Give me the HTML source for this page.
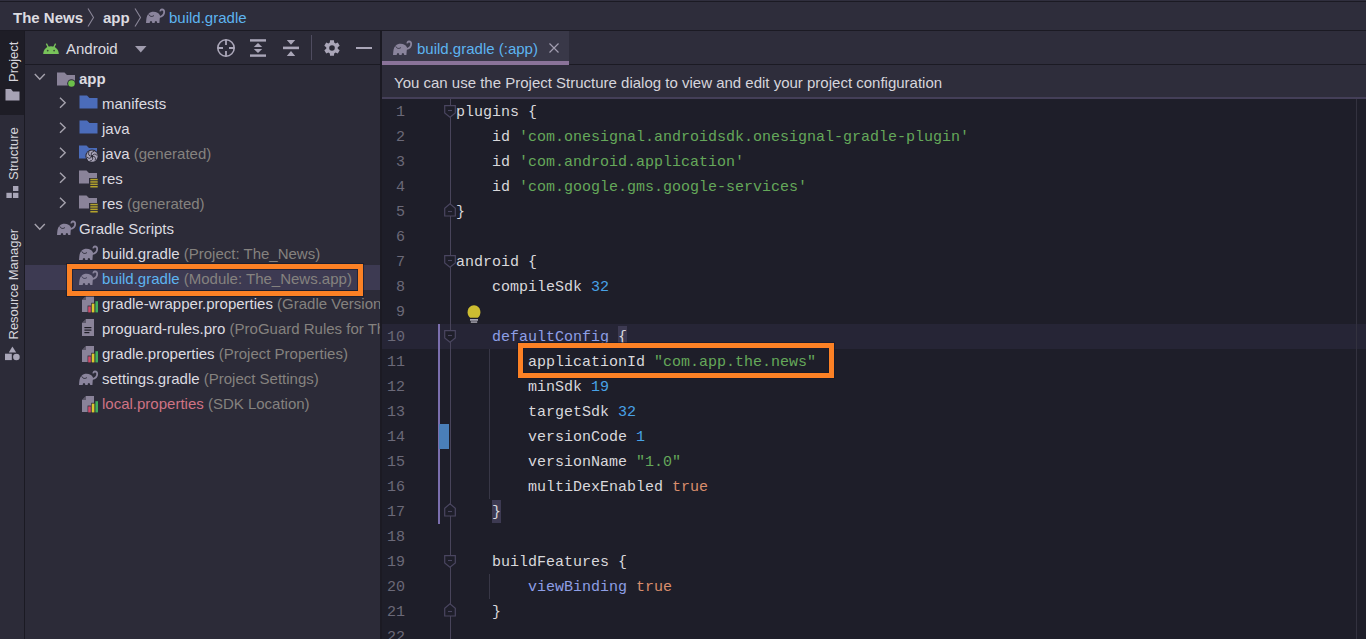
<!DOCTYPE html>
<html><head><meta charset="utf-8"><style>
*{margin:0;padding:0;box-sizing:border-box}
html,body{width:1366px;height:639px;overflow:hidden;background:#1f1e27}
body{position:relative;font-family:"Liberation Sans",sans-serif;font-size:15px;color:#dcdbe0}
.a{position:absolute}
.t{position:absolute;white-space:pre;line-height:20px}
.gr{color:#85827f}
.bl{color:#5db4f0}
.m{position:absolute;white-space:pre;font-family:"Liberation Mono",monospace;font-size:15px;line-height:25px;color:#d9d8dc;left:456px}
.s{color:#65a85a}
.n{color:#48a2e6}
.k{color:#d98d6c}
.f{color:#8e9fe6}
.ln{position:absolute;white-space:pre;font-family:"Liberation Mono",monospace;font-size:15px;line-height:25px;color:#6b6978;text-align:right;width:40px;left:365px}
svg{position:absolute;overflow:visible}
</style></head><body>
<div class="a" style="left:0px;top:0px;width:1366px;height:31px;background:#2e2d3b;"></div>
<div class="a" style="left:0px;top:0px;width:1366px;height:1px;background:#302f3e;"></div>
<div class="a" style="left:0px;top:1px;width:1366px;height:1px;background:#1b1a23;"></div>
<div class="a" style="left:0px;top:30px;width:1366px;height:1px;background:#1b1a23;"></div>
<div class="a" style="left:0px;top:31px;width:24px;height:608px;background:#2c2b38;"></div>
<div class="a" style="left:0px;top:31px;width:24px;height:84px;background:#1e1d26;"></div>
<div class="a" style="left:24px;top:31px;width:1px;height:608px;background:#1b1a23;"></div>
<div class="a" style="left:25px;top:31px;width:355px;height:608px;background:#2c2b38;"></div>
<div class="a" style="left:25px;top:64px;width:355px;height:1px;background:#1b1a23;"></div>
<div class="a" style="left:380px;top:31px;width:2px;height:608px;background:#1b1a23;"></div>
<div class="a" style="left:382px;top:31px;width:984px;height:33px;background:#2e2d3b;"></div>
<div class="a" style="left:382px;top:64px;width:984px;height:1px;background:#1b1a23;"></div>
<div class="a" style="left:382px;top:31px;width:187px;height:30px;background:#393848;"></div>
<div class="a" style="left:382px;top:61px;width:187px;height:4px;background:#8a7399;"></div>
<div class="a" style="left:382px;top:65px;width:984px;height:32px;background:#2e2d3b;"></div>
<div class="a" style="left:382px;top:97px;width:984px;height:2px;background:#443f58;"></div>
<div class="a" style="left:382px;top:99px;width:984px;height:540px;background:#1e1e29;"></div>
<div class="t" style="left:13px;top:8px;font-weight:bold">The News</div>
<svg style="left:87px;top:8px" width="8" height="19"><path d="M1,0.5 L6.5,9.5 L1,18.5" fill="none" stroke="#8a8698" stroke-width="1.1"/></svg>
<div class="t" style="left:103px;top:8px;font-weight:bold">app</div>
<svg style="left:134px;top:8px" width="8" height="19"><path d="M1,0.5 L6.5,9.5 L1,18.5" fill="none" stroke="#8a8698" stroke-width="1.1"/></svg>
<svg style="left:146px;top:9px" width="19" height="14" viewBox="0 0 19 14"><path d="M0,14 L0.3,10.5 C0.8,5.4 3.6,2.8 7.6,2.8 C10.6,2.8 12.8,4.2 14,6.4 L13.4,14 L11.2,14 A1.3,2 0 0 0 8.6,14 L6.3,14 A1.3,2 0 0 0 3.7,14 Z" fill="#8a849c"/><path d="M12.8,8.2 C16.2,7.6 18.2,5.4 18.2,3.1 C18.2,1.3 17,0.5 16,0.5 C14.9,0.5 14.3,1.3 14.4,2.4" fill="none" stroke="#8a849c" stroke-width="1.8"/><path d="M2.8,5.4 C3.8,7.8 6.4,8 8,6.4" fill="none" stroke="#2e2d3b" stroke-width="1"/></svg>
<div class="t" style="left:169px;top:8px" class="bl"><span class="bl">build.gradle</span></div>
<div class="t" style="left:-6px;top:54px;font-size:13px;width:40px;transform:rotate(-90deg);transform-origin:center;line-height:16px;color:#d6d5dc">Project</div>
<svg style="left:5px;top:89px" width="15" height="12" viewBox="0 0 15 12"><path d="M0.5,0 L6,0 L8,2.5 L14.5,2.5 L14.5,11.5 L0.5,11.5 Z" fill="#a7a3b5"/></svg>
<div class="t" style="left:-12px;top:146px;font-size:13px;width:52px;transform:rotate(-90deg);transform-origin:center;line-height:16px;color:#d6d5dc">Structure</div>
<svg style="left:6px;top:186px" width="13" height="13" viewBox="0 0 13 13"><rect x="7" y="0" width="5.4" height="5" fill="#a9a6b8"/><rect x="0.4" y="6.8" width="5.4" height="5.2" fill="#a9a6b8"/><rect x="7" y="6.8" width="5.4" height="5.2" fill="#a9a6b8"/></svg>
<div class="t" style="left:-42px;top:276px;font-size:13px;width:111px;transform:rotate(-90deg);transform-origin:center;line-height:16px;color:#d6d5dc">Resource Manager</div>
<svg style="left:5px;top:346px" width="15" height="15" viewBox="0 0 15 15"><path d="M7.4,0.4 L11.2,6.4 L3.8,6.4 Z" fill="#a9a6b8"/><rect x="0" y="7.7" width="6.8" height="6.4" fill="#a9a6b8"/><circle cx="11.4" cy="11" r="3.3" fill="#a9a6b8"/></svg>
<svg style="left:43px;top:43px" width="16" height="11" viewBox="0 0 16 11"><path d="M0.2,11 C0.4,6.5 3.5,3.3 8,3.3 C12.5,3.3 15.6,6.5 15.8,11 Z" fill="#78c35a"/><path d="M3.4,0.6 L5.4,4.6 M12.6,0.6 L10.6,4.6" stroke="#78c35a" stroke-width="1.3"/><circle cx="4.7" cy="7.6" r="0.9" fill="#3b4a35"/><circle cx="11.1" cy="7.6" r="0.9" fill="#3b4a35"/></svg>
<div class="t" style="left:66px;top:39px">Android</div>
<svg style="left:135px;top:46px" width="12" height="7" viewBox="0 0 12 7"><path d="M0,0 L11.5,0 L5.75,6.5 Z" fill="#a09cae"/></svg>
<svg style="left:216px;top:38px" width="20" height="20" viewBox="0 0 20 20"><circle cx="10" cy="10" r="8.2" fill="none" stroke="#aaa6b8" stroke-width="1.6"/><path d="M10,1.5 V7 M10,13 V18.5 M1.5,10 H7 M13,10 H18.5" stroke="#aaa6b8" stroke-width="1.8"/></svg>
<svg style="left:250px;top:38px" width="17" height="20" viewBox="0 0 17 20"><rect x="0" y="1.2" width="16" height="2.4" fill="#aaa6b8"/><rect x="0" y="16.4" width="16" height="2.4" fill="#aaa6b8"/><path d="M8,5 L12.2,9 L3.8,9 Z M8,15 L12.2,11 L3.8,11 Z" fill="#aaa6b8"/></svg>
<svg style="left:283px;top:38px" width="17" height="20" viewBox="0 0 17 20"><rect x="0" y="8.6" width="16" height="2.6" fill="#aaa6b8"/><path d="M3.8,2 L12.2,2 L8,6.8 Z M3.8,18 L12.2,18 L8,13 Z" fill="#aaa6b8"/></svg>
<div class="a" style="left:311px;top:35px;width:1px;height:25px;background:#4f4c60"></div>
<svg style="left:324px;top:40px" width="16" height="16" viewBox="0 0 16 16"><path d="M6.06,0.24 L9.94,0.24 L10.17,2.62 L11.57,3.43 L13.75,2.44 L15.69,5.79 L13.74,7.19 L13.74,8.81 L15.69,10.21 L13.75,13.56 L11.57,12.57 L10.17,13.38 L9.94,15.76 L6.06,15.76 L5.83,13.38 L4.43,12.57 L2.25,13.56 L0.31,10.21 L2.26,8.81 L2.26,7.19 L0.31,5.79 L2.25,2.44 L4.43,3.43 L5.83,2.62 Z" fill="#aaa6b8"/><circle cx="8" cy="8" r="2.8" fill="#2c2b38"/></svg>
<div class="a" style="left:356px;top:47px;width:16px;height:2px;background:#aaa6b8"></div>
<div class="a" style="left:0;top:0;width:380px;height:639px;overflow:hidden">
<div class="a" style="left:25px;top:265px;width:355px;height:25px;background:#3d3a52"></div>
<svg style="left:34px;top:73px" width="12" height="8" viewBox="0 0 12 8"><path d="M0.8,1 L5.8,6.2 L10.8,1" fill="none" stroke="#a6a3ae" stroke-width="1.4"/></svg>
<svg style="left:57px;top:72px" width="19" height="16" viewBox="0 0 19 16"><path d="M0,0.5 L7.5,0.5 L10,3 L18,3 L18,13.5 L0,13.5 Z" fill="#8a8399"/><circle cx="14.5" cy="11.5" r="4.3" fill="#2c2b38"/><circle cx="14.5" cy="11.5" r="3.3" fill="#6cc04a"/></svg>
<div class="t" style="left:79px;top:69px;font-weight:bold">app</div>
<svg style="left:59px;top:97px" width="8" height="12" viewBox="0 0 8 12"><path d="M1,0.8 L6.2,5.8 L1,10.8" fill="none" stroke="#a6a3ae" stroke-width="1.4"/></svg>
<svg style="left:79px;top:95px" width="19" height="14" viewBox="0 0 18 14"><path d="M0,0.5 L7.5,0.5 L10,3 L18,3 L18,13.5 L0,13.5 Z" fill="#4b6cba"/></svg>
<div class="t" style="left:102px;top:94px">manifests</div>
<svg style="left:59px;top:122px" width="8" height="12" viewBox="0 0 8 12"><path d="M1,0.8 L6.2,5.8 L1,10.8" fill="none" stroke="#a6a3ae" stroke-width="1.4"/></svg>
<svg style="left:79px;top:120px" width="19" height="14" viewBox="0 0 18 14"><path d="M0,0.5 L7.5,0.5 L10,3 L18,3 L18,13.5 L0,13.5 Z" fill="#4b6cba"/></svg>
<div class="t" style="left:102px;top:119px">java</div>
<svg style="left:59px;top:147px" width="8" height="12" viewBox="0 0 8 12"><path d="M1,0.8 L6.2,5.8 L1,10.8" fill="none" stroke="#a6a3ae" stroke-width="1.4"/></svg>
<svg style="left:79px;top:145px" width="21" height="19" viewBox="0 0 21 19"><path d="M0,0.5 L7.5,0.5 L10,3 L18,3 L18,13.5 L0,13.5 Z" fill="#4b6cba"/><circle cx="13" cy="11.2" r="6.6" fill="#2c2b38"/><circle cx="13" cy="11.2" r="5.6" fill="#a9a4b8"/><path d="M13,11.2 Q17.60,11.20 16.10,15.62" fill="none" stroke="#2c2b38" stroke-width="0.9"/><path d="M13,11.2 Q15.30,15.18 10.72,16.09" fill="none" stroke="#2c2b38" stroke-width="0.9"/><path d="M13,11.2 Q10.70,15.18 7.62,11.67" fill="none" stroke="#2c2b38" stroke-width="0.9"/><path d="M13,11.2 Q8.40,11.20 9.90,6.78" fill="none" stroke="#2c2b38" stroke-width="0.9"/><path d="M13,11.2 Q10.70,7.22 15.28,6.31" fill="none" stroke="#2c2b38" stroke-width="0.9"/><path d="M13,11.2 Q15.30,7.22 18.38,10.73" fill="none" stroke="#2c2b38" stroke-width="0.9"/><circle cx="13" cy="11.2" r="1" fill="#2c2b38"/></svg>
<div class="t" style="left:102px;top:144px">java <span class="gr">(generated)</span></div>
<svg style="left:59px;top:172px" width="8" height="12" viewBox="0 0 8 12"><path d="M1,0.8 L6.2,5.8 L1,10.8" fill="none" stroke="#a6a3ae" stroke-width="1.4"/></svg>
<svg style="left:79px;top:170px" width="20" height="19" viewBox="0 0 20 19"><path d="M0,0.5 L7.5,0.5 L10,3 L18,3 L18,13.5 L0,13.5 Z" fill="#8a8399"/><rect x="10" y="8" width="10" height="11" fill="#2c2b38"/><rect x="11.3" y="8.8" width="7.4" height="1.5" fill="#b4a32c"/><rect x="11.3" y="11.2" width="7.4" height="1.5" fill="#b4a32c"/><rect x="11.3" y="13.6" width="7.4" height="1.5" fill="#b4a32c"/><rect x="11.3" y="16.0" width="7.4" height="1.5" fill="#b4a32c"/></svg>
<div class="t" style="left:102px;top:169px">res</div>
<svg style="left:59px;top:197px" width="8" height="12" viewBox="0 0 8 12"><path d="M1,0.8 L6.2,5.8 L1,10.8" fill="none" stroke="#a6a3ae" stroke-width="1.4"/></svg>
<svg style="left:79px;top:195px" width="20" height="19" viewBox="0 0 20 19"><path d="M0,0.5 L7.5,0.5 L10,3 L18,3 L18,13.5 L0,13.5 Z" fill="#8a8399"/><rect x="10" y="8" width="10" height="11" fill="#2c2b38"/><rect x="11.3" y="8.8" width="7.4" height="1.5" fill="#b4a32c"/><rect x="11.3" y="11.2" width="7.4" height="1.5" fill="#b4a32c"/><rect x="11.3" y="13.6" width="7.4" height="1.5" fill="#b4a32c"/><rect x="11.3" y="16.0" width="7.4" height="1.5" fill="#b4a32c"/></svg>
<div class="t" style="left:102px;top:194px">res <span class="gr">(generated)</span></div>
<svg style="left:34px;top:223px" width="12" height="8" viewBox="0 0 12 8"><path d="M0.8,1 L5.8,6.2 L10.8,1" fill="none" stroke="#a6a3ae" stroke-width="1.4"/></svg>
<svg style="left:57px;top:221px" width="19" height="14" viewBox="0 0 19 14"><path d="M0,14 L0.3,10.5 C0.8,5.4 3.6,2.8 7.6,2.8 C10.6,2.8 12.8,4.2 14,6.4 L13.4,14 L11.2,14 A1.3,2 0 0 0 8.6,14 L6.3,14 A1.3,2 0 0 0 3.7,14 Z" fill="#8a849c"/><path d="M12.8,8.2 C16.2,7.6 18.2,5.4 18.2,3.1 C18.2,1.3 17,0.5 16,0.5 C14.9,0.5 14.3,1.3 14.4,2.4" fill="none" stroke="#8a849c" stroke-width="1.8"/><path d="M2.8,5.4 C3.8,7.8 6.4,8 8,6.4" fill="none" stroke="#2c2b38" stroke-width="1"/></svg>
<div class="t" style="left:79px;top:219px">Gradle Scripts</div>
<svg style="left:79px;top:246px" width="19" height="14" viewBox="0 0 19 14"><path d="M0,14 L0.3,10.5 C0.8,5.4 3.6,2.8 7.6,2.8 C10.6,2.8 12.8,4.2 14,6.4 L13.4,14 L11.2,14 A1.3,2 0 0 0 8.6,14 L6.3,14 A1.3,2 0 0 0 3.7,14 Z" fill="#8a849c"/><path d="M12.8,8.2 C16.2,7.6 18.2,5.4 18.2,3.1 C18.2,1.3 17,0.5 16,0.5 C14.9,0.5 14.3,1.3 14.4,2.4" fill="none" stroke="#8a849c" stroke-width="1.8"/><path d="M2.8,5.4 C3.8,7.8 6.4,8 8,6.4" fill="none" stroke="#2c2b38" stroke-width="1"/></svg>
<div class="t" style="left:102px;top:244px">build.gradle <span class="gr">(Project: The_News)</span></div>
<svg style="left:79px;top:271px" width="19" height="14" viewBox="0 0 19 14"><path d="M0,14 L0.3,10.5 C0.8,5.4 3.6,2.8 7.6,2.8 C10.6,2.8 12.8,4.2 14,6.4 L13.4,14 L11.2,14 A1.3,2 0 0 0 8.6,14 L6.3,14 A1.3,2 0 0 0 3.7,14 Z" fill="#8a849c"/><path d="M12.8,8.2 C16.2,7.6 18.2,5.4 18.2,3.1 C18.2,1.3 17,0.5 16,0.5 C14.9,0.5 14.3,1.3 14.4,2.4" fill="none" stroke="#8a849c" stroke-width="1.8"/><path d="M2.8,5.4 C3.8,7.8 6.4,8 8,6.4" fill="none" stroke="#3d3a52" stroke-width="1"/></svg>
<div class="t" style="left:102px;top:269px"><span class="bl">build.gradle</span> <span class="gr">(Module: The_News.app)</span></div>
<svg style="left:82px;top:296px" width="18" height="18" viewBox="0 0 18 18"><path d="M4,0 L12,0 L12,16 L0,16 L0,4 Z" fill="#8a8399"/><path d="M0,4 L4,4 L4,0" fill="#2c2b38" opacity="0.5"/><rect x="5.6" y="9.6" width="3.6" height="7.2" fill="#2c2b38"/><rect x="9.2" y="6.8" width="3.6" height="10" fill="#2c2b38"/><rect x="12.8" y="4.4" width="3.8" height="12.4" fill="#2c2b38"/><rect x="6.2" y="10.4" width="2.6" height="6" fill="#d24a6a"/><rect x="9.8" y="7.6" width="2.6" height="8.8" fill="#d9c92e"/><rect x="13.4" y="5.2" width="2.6" height="11.2" fill="#3fae5a"/></svg>
<div class="t" style="left:102px;top:294px">gradle-wrapper.properties <span class="gr">(Gradle Version)</span></div>
<svg style="left:82px;top:319px" width="13" height="18" viewBox="0 0 13 18"><path d="M4,0 L12,0 L12,17 L0,17 L0,4 Z" fill="#8a8399"/><path d="M0,4 L4,4 L4,0" fill="#2c2b38" opacity="0.5"/><rect x="2.4" y="8" width="7" height="1.2" fill="#1d1c24"/><rect x="2.4" y="10.5" width="7" height="1.2" fill="#1d1c24"/><rect x="2.4" y="13" width="5" height="1.2" fill="#1d1c24"/></svg>
<div class="t" style="left:102px;top:319px">proguard-rules.pro <span class="gr">(ProGuard Rules for The_News.app)</span></div>
<svg style="left:82px;top:346px" width="18" height="18" viewBox="0 0 18 18"><path d="M4,0 L12,0 L12,16 L0,16 L0,4 Z" fill="#8a8399"/><path d="M0,4 L4,4 L4,0" fill="#2c2b38" opacity="0.5"/><rect x="5.6" y="9.6" width="3.6" height="7.2" fill="#2c2b38"/><rect x="9.2" y="6.8" width="3.6" height="10" fill="#2c2b38"/><rect x="12.8" y="4.4" width="3.8" height="12.4" fill="#2c2b38"/><rect x="6.2" y="10.4" width="2.6" height="6" fill="#d24a6a"/><rect x="9.8" y="7.6" width="2.6" height="8.8" fill="#d9c92e"/><rect x="13.4" y="5.2" width="2.6" height="11.2" fill="#3fae5a"/></svg>
<div class="t" style="left:102px;top:344px">gradle.properties <span class="gr">(Project Properties)</span></div>
<svg style="left:79px;top:371px" width="19" height="14" viewBox="0 0 19 14"><path d="M0,14 L0.3,10.5 C0.8,5.4 3.6,2.8 7.6,2.8 C10.6,2.8 12.8,4.2 14,6.4 L13.4,14 L11.2,14 A1.3,2 0 0 0 8.6,14 L6.3,14 A1.3,2 0 0 0 3.7,14 Z" fill="#8a849c"/><path d="M12.8,8.2 C16.2,7.6 18.2,5.4 18.2,3.1 C18.2,1.3 17,0.5 16,0.5 C14.9,0.5 14.3,1.3 14.4,2.4" fill="none" stroke="#8a849c" stroke-width="1.8"/><path d="M2.8,5.4 C3.8,7.8 6.4,8 8,6.4" fill="none" stroke="#2c2b38" stroke-width="1"/></svg>
<div class="t" style="left:102px;top:369px">settings.gradle <span class="gr">(Project Settings)</span></div>
<svg style="left:82px;top:396px" width="18" height="18" viewBox="0 0 18 18"><path d="M4,0 L12,0 L12,16 L0,16 L0,4 Z" fill="#8a8399"/><path d="M0,4 L4,4 L4,0" fill="#2c2b38" opacity="0.5"/><rect x="5.6" y="9.6" width="3.6" height="7.2" fill="#2c2b38"/><rect x="9.2" y="6.8" width="3.6" height="10" fill="#2c2b38"/><rect x="12.8" y="4.4" width="3.8" height="12.4" fill="#2c2b38"/><rect x="6.2" y="10.4" width="2.6" height="6" fill="#d24a6a"/><rect x="9.8" y="7.6" width="2.6" height="8.8" fill="#d9c92e"/><rect x="13.4" y="5.2" width="2.6" height="11.2" fill="#3fae5a"/></svg>
<div class="t" style="left:102px;top:394px"><span style="color:#cf7384">local.properties</span> <span class="gr">(SDK Location)</span></div>
</div>
<svg style="left:393px;top:41px" width="19" height="14" viewBox="0 0 19 14"><path d="M0,14 L0.3,10.5 C0.8,5.4 3.6,2.8 7.6,2.8 C10.6,2.8 12.8,4.2 14,6.4 L13.4,14 L11.2,14 A1.3,2 0 0 0 8.6,14 L6.3,14 A1.3,2 0 0 0 3.7,14 Z" fill="#8a849c"/><path d="M12.8,8.2 C16.2,7.6 18.2,5.4 18.2,3.1 C18.2,1.3 17,0.5 16,0.5 C14.9,0.5 14.3,1.3 14.4,2.4" fill="none" stroke="#8a849c" stroke-width="1.8"/><path d="M2.8,5.4 C3.8,7.8 6.4,8 8,6.4" fill="none" stroke="#393848" stroke-width="1"/></svg>
<div class="t" style="left:417px;top:39px"><span class="bl">build.gradle (:app)</span></div>
<svg style="left:549px;top:43px" width="10" height="10" viewBox="0 0 10 10"><path d="M0.5,0.5 L9.5,9.5 M9.5,0.5 L0.5,9.5" stroke="#a29eb0" stroke-width="1.2"/></svg>
<div class="t" style="left:394px;top:73px;color:#d6d5dc">You can use the Project Structure dialog to view and edit your project configuration</div>
<div class="a" style="left:382px;top:324px;width:984px;height:25px;background:#262536"></div>
<div class="a" style="left:1356px;top:99px;width:1px;height:540px;background:#33323f"></div>
<div class="a" style="left:450px;top:99px;width:1px;height:540px;background:#48445a"></div>
<div class="a" style="left:438px;top:324px;width:1.5px;height:200px;background:#7b6fae"></div>
<div class="a" style="left:439px;top:424px;width:10px;height:25px;background:#4a7fb8"></div>
<div class="a" style="left:489px;top:349px;width:1px;height:150px;background:#383746"></div>
<div class="a" style="left:489px;top:574px;width:1px;height:25px;background:#383746"></div>
<div class="a" style="left:618px;top:326px;width:9px;height:22px;background:#3d3a52"></div>
<div class="a" style="left:492px;top:500px;width:9px;height:23px;background:#3d3a52"></div>
<svg style="left:444px;top:105px" width="13" height="13" viewBox="0 0 13 13"><path d="M0.7,0.7 L11.3,0.7 L11.3,8 L6,12.3 L0.7,8 Z" fill="#1e1e29" stroke="#4a4660" stroke-width="1.2"/><path d="M4,5.5 H8" stroke="#4a4660" stroke-width="1.1"/></svg>
<svg style="left:444px;top:255px" width="13" height="13" viewBox="0 0 13 13"><path d="M0.7,0.7 L11.3,0.7 L11.3,8 L6,12.3 L0.7,8 Z" fill="#1e1e29" stroke="#4a4660" stroke-width="1.2"/><path d="M4,5.5 H8" stroke="#4a4660" stroke-width="1.1"/></svg>
<svg style="left:444px;top:330px" width="13" height="13" viewBox="0 0 13 13"><path d="M0.7,0.7 L11.3,0.7 L11.3,8 L6,12.3 L0.7,8 Z" fill="#1e1e29" stroke="#4a4660" stroke-width="1.2"/><path d="M4,5.5 H8" stroke="#4a4660" stroke-width="1.1"/></svg>
<svg style="left:444px;top:555px" width="13" height="13" viewBox="0 0 13 13"><path d="M0.7,0.7 L11.3,0.7 L11.3,8 L6,12.3 L0.7,8 Z" fill="#1e1e29" stroke="#4a4660" stroke-width="1.2"/><path d="M4,5.5 H8" stroke="#4a4660" stroke-width="1.1"/></svg>
<svg style="left:444px;top:203px" width="13" height="14" viewBox="0 0 13 14"><path d="M0.7,13 L11.3,13 L11.3,5.3 L6,0.7 L0.7,5.3 Z" fill="#1e1e29" stroke="#4a4660" stroke-width="1.2"/><path d="M4,8.5 H8" stroke="#4a4660" stroke-width="1.1"/></svg>
<svg style="left:444px;top:503px" width="13" height="14" viewBox="0 0 13 14"><path d="M0.7,13 L11.3,13 L11.3,5.3 L6,0.7 L0.7,5.3 Z" fill="#1e1e29" stroke="#4a4660" stroke-width="1.2"/><path d="M4,8.5 H8" stroke="#4a4660" stroke-width="1.1"/></svg>
<svg style="left:444px;top:603px" width="13" height="14" viewBox="0 0 13 14"><path d="M0.7,13 L11.3,13 L11.3,5.3 L6,0.7 L0.7,5.3 Z" fill="#1e1e29" stroke="#4a4660" stroke-width="1.2"/><path d="M4,8.5 H8" stroke="#4a4660" stroke-width="1.1"/></svg>
<svg style="left:467px;top:305px" width="14" height="19" viewBox="0 0 14 19"><path d="M3.2,12.8 C1.6,11.4 0.6,9.6 0.6,7.2 C0.6,3.2 3.4,0.2 7,0.2 C10.6,0.2 13.4,3.2 13.4,7.2 C13.4,9.6 12.4,11.4 10.8,12.8 Z" fill="#cdbd31"/><rect x="3" y="14.2" width="8" height="1.4" fill="#c9c7d2"/><rect x="3.8" y="16.2" width="6.4" height="1.8" fill="#8d8b96"/></svg>
<div class="ln" style="top:100px">1</div>
<div class="m" style="top:100px">plugins {</div>
<div class="ln" style="top:125px">2</div>
<div class="m" style="top:125px">    id <span class="s">&#x27;com.onesignal.androidsdk.onesignal-gradle-plugin&#x27;</span></div>
<div class="ln" style="top:150px">3</div>
<div class="m" style="top:150px">    id <span class="s">&#x27;com.android.application&#x27;</span></div>
<div class="ln" style="top:175px">4</div>
<div class="m" style="top:175px">    id <span class="s">&#x27;com.google.gms.google-services&#x27;</span></div>
<div class="ln" style="top:200px">5</div>
<div class="m" style="top:200px">}</div>
<div class="ln" style="top:225px">6</div>
<div class="ln" style="top:250px">7</div>
<div class="m" style="top:250px">android {</div>
<div class="ln" style="top:275px">8</div>
<div class="m" style="top:275px">    compileSdk <span class="n">32</span></div>
<div class="ln" style="top:300px">9</div>
<div class="ln" style="top:325px">10</div>
<div class="m" style="top:325px">    <span class="f">defaultConfig</span> {</div>
<div class="ln" style="top:350px">11</div>
<div class="m" style="top:350px">        applicationId <span class="s">&quot;com.app.the.news&quot;</span></div>
<div class="ln" style="top:375px">12</div>
<div class="m" style="top:375px">        minSdk <span class="n">19</span></div>
<div class="ln" style="top:400px">13</div>
<div class="m" style="top:400px">        targetSdk <span class="n">32</span></div>
<div class="ln" style="top:425px">14</div>
<div class="m" style="top:425px">        versionCode <span class="n">1</span></div>
<div class="ln" style="top:450px">15</div>
<div class="m" style="top:450px">        versionName <span class="s">&quot;1.0&quot;</span></div>
<div class="ln" style="top:475px">16</div>
<div class="m" style="top:475px">        multiDexEnabled <span class="k">true</span></div>
<div class="ln" style="top:500px">17</div>
<div class="m" style="top:500px">    }</div>
<div class="ln" style="top:525px">18</div>
<div class="ln" style="top:550px">19</div>
<div class="m" style="top:550px">    buildFeatures {</div>
<div class="ln" style="top:575px">20</div>
<div class="m" style="top:575px">        <span class="f">viewBinding</span> <span class="k">true</span></div>
<div class="ln" style="top:600px">21</div>
<div class="m" style="top:600px">    }</div>
<div class="ln" style="top:625px">22</div>
<div class="a" style="left:67px;top:264px;width:296px;height:32px;border:5px solid #fc8125;box-shadow:0 0 0 1px rgba(20,24,40,0.6), inset 0 0 0 1px rgba(20,24,40,0.6)"></div>
<div class="a" style="left:518px;top:343px;width:316px;height:35px;border:5px solid #fc8125;box-shadow:0 0 0 1px rgba(20,24,40,0.6), inset 0 0 0 1px rgba(20,24,40,0.6)"></div>
</body></html>
